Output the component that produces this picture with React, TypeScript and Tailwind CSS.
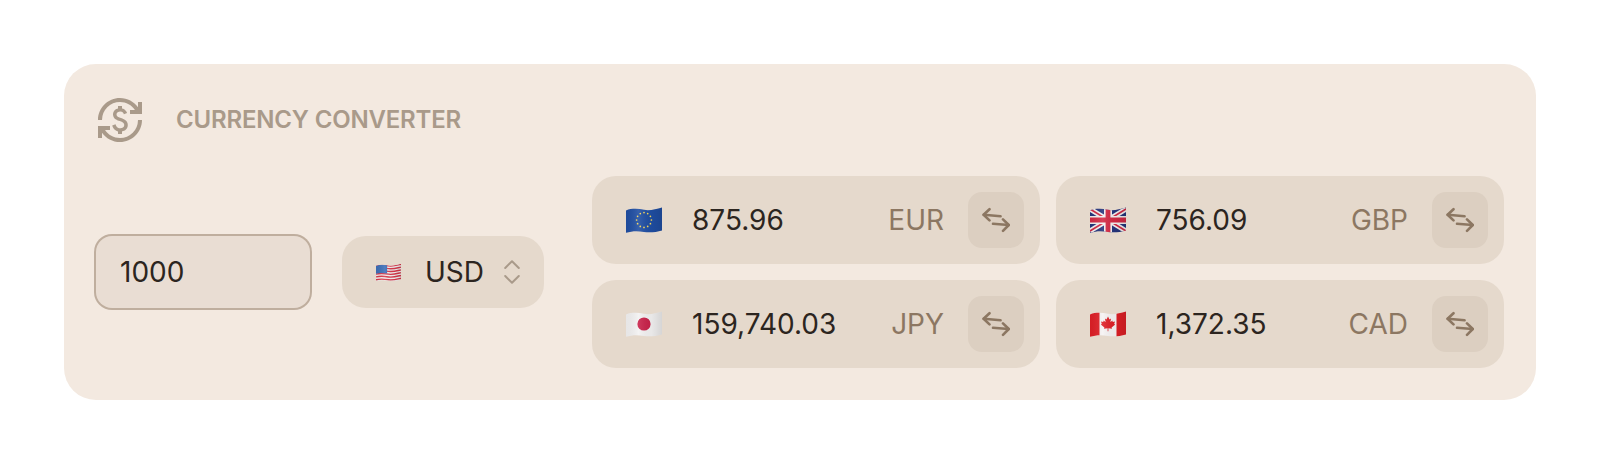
import { MdCurrencyExchange } from 'react-icons/md'

const WAVE = 'M0 3.4C6 1.2 12 1.6 18 2.8S30 2 36 0.4V23.4C30 25 24 26 18 24.9S6 23.8 0 25.8Z'

const EU_STARS = Array.from({ length: 12 }, (_, i) => {
  const a = (i * Math.PI) / 6
  return { x: 18 + Math.sin(a) * 7.4, y: 13 - Math.cos(a) * 7.4 }
})

function FlagShape({ id, className, children }: { id: string; className: string; children: React.ReactNode }) {
  return (
    <svg viewBox="0 0 36 26" className={className}>
      <defs>
        <clipPath id={`clip-${id}`}>
          <path d={WAVE} />
        </clipPath>
        <linearGradient id={`shade-${id}`} x1="0" x2="1" y1="0" y2="0">
          <stop offset="0" stopColor="#000" stopOpacity="0.05" />
          <stop offset="0.35" stopColor="#fff" stopOpacity="0.1" />
          <stop offset="0.7" stopColor="#000" stopOpacity="0.04" />
          <stop offset="1" stopColor="#000" stopOpacity="0.12" />
        </linearGradient>
      </defs>
      <g clipPath={`url(#clip-${id})`}>
        {children}
        <rect width="36" height="26" fill={`url(#shade-${id})`} />
      </g>
    </svg>
  )
}

function Flag({ code, className }: { code: string; className: string }) {
  if (code === 'USD') {
    return (
      <FlagShape id="us" className={className}>
        <rect width="36" height="26" fill="#f4f1f1" />
        {[2, 6, 10, 14, 18, 22].map((y) => (
          <path key={y} d={`M0 ${y + 1.4}C6 ${y - 0.2} 12 ${y + 0.4} 18 ${y + 1.4}S30 ${y + 0.6} 36 ${y - 0.8}`} stroke="#d8384a" strokeWidth="2" fill="none" />
        ))}
        <path d="M0 3.4C6 1.2 12 1.6 16 2.4V14.6C12 13.8 6 13.2 0 14.8Z" fill="#3d6fb8" />
      </FlagShape>
    )
  }
  if (code === 'EUR') {
    return (
      <FlagShape id="eu" className={className}>
        <rect width="36" height="26" fill="#1f4ea3" />
        {EU_STARS.map((s, i) => (
          <circle key={i} cx={s.x} cy={s.y} r="0.85" fill="#f4d65a" />
        ))}
      </FlagShape>
    )
  }
  if (code === 'GBP') {
    return (
      <FlagShape id="gb" className={className}>
        <rect width="36" height="26" fill="#25357c" />
        <path d="M0 2L36 24M36 2L0 24" stroke="#f4f1f1" strokeWidth="5" />
        <path d="M0 2L36 24M36 2L0 24" stroke="#d42a45" strokeWidth="1.6" />
        <path d="M18 0V26M0 13H36" stroke="#f4f1f1" strokeWidth="8" />
        <path d="M18 0V26M0 13H36" stroke="#d42a45" strokeWidth="4.8" />
      </FlagShape>
    )
  }
  if (code === 'JPY') {
    return (
      <FlagShape id="jp" className={className}>
        <rect width="36" height="26" fill="#f3f2f2" />
        <circle cx="18" cy="13" r="6.6" fill="#c9224a" />
      </FlagShape>
    )
  }
  return (
    <FlagShape id="ca" className={className}>
      <rect width="36" height="26" fill="#f6f3f3" />
      <rect width="9.5" height="26" fill="#df1f26" />
      <rect x="26.5" width="9.5" height="26" fill="#df1f26" />
      <path
        d="M18 5.5L19.5 8.4L21 7.6L20.4 11.2L22.3 9.5L22.8 10.9L25 10.5L24.2 13L25.2 13.6L21.6 16.5L22 17.8L18.4 17.3V20.2H17.6V17.3L14 17.8L14.4 16.5L10.8 13.6L11.8 13L11 10.5L13.2 10.9L13.7 9.5L15.6 11.2L15 7.6L16.5 8.4Z"
        fill="#df1f26"
      />
    </FlagShape>
  )
}

function SwapIcon() {
  return (
    <svg viewBox="0 0 28 28" className="w-7 h-7 text-[#8c7762]" fill="none" stroke="currentColor" strokeWidth="2.6" strokeLinecap="round" strokeLinejoin="round">
      <path d="M7.5 3.2L1.6 8.8L7.5 14.4" />
      <path d="M1.8 8.8L18.6 10.2" />
      <path d="M21 13.4L26.8 19L21 24.8" />
      <path d="M11 17.8L26.6 19" />
    </svg>
  )
}

function UpDownIcon() {
  return (
    <svg viewBox="0 0 16 24" className="w-4 h-6 text-[#a99a8a]" fill="none" stroke="currentColor" strokeWidth="2" strokeLinecap="round" strokeLinejoin="round">
      <path d="M1.2 8L8 1.2L14.8 8" />
      <path d="M1.2 16L8 22.8L14.8 16" />
    </svg>
  )
}

const RATES = [
  { code: 'EUR', value: '875.96' },
  { code: 'GBP', value: '756.09' },
  { code: 'JPY', value: '159,740.03' },
  { code: 'CAD', value: '1,372.35' }
]

export default function App() {
  return (
    <div className="p-16 bg-white font-['Inter',sans-serif]">
      <div className="h-[336px] rounded-[32px] bg-[#f3e9e0] p-8">
        <div className="flex items-center gap-8 mb-8">
          <MdCurrencyExchange className="w-12 h-12 text-[#a99a8a]" />
          <span className="text-2xl font-semibold tracking-[-0.18px] text-[#a99a8a]">CURRENCY CONVERTER</span>
        </div>

        <div className="flex items-center">
          <input
            readOnly
            value="1000"
            className="w-[214px] h-[72px] px-6 rounded-2xl bg-[#e9ddd3] ring-2 ring-[#bfae9e] text-[28px] text-[#2c2520] outline-none"
          />
          <div className="ml-8 w-[202px] h-[72px] flex items-center pl-[34px] rounded-3xl bg-[#e5d9cc]">
            <Flag code="USD" className="w-[25px] h-[19px]" />
            <span className="ml-6 text-[28px] text-[#2c2520]">USD</span>
            <div className="ml-5 flex">
              <UpDownIcon />
            </div>
          </div>

          <div className="ml-12 w-[912px] grid grid-cols-2 gap-4">
            {RATES.map((rate) => (
              <div key={rate.code} className="h-[88px] flex items-center pl-[34px] pr-4 rounded-3xl bg-[#e5d9cc]">
                <Flag code={rate.code} className="w-9 h-[26px]" />
                <span className="ml-[30px] text-[28px] text-[#2c2520]">{rate.value}</span>
                <span className="ml-auto text-[28px] text-[#8c7762]">{rate.code}</span>
                <button className="ml-6 w-14 h-14 flex items-center justify-center rounded-[14px] bg-[#dccfc1]">
                  <SwapIcon />
                </button>
              </div>
            ))}
          </div>
        </div>
      </div>
    </div>
  )
}
